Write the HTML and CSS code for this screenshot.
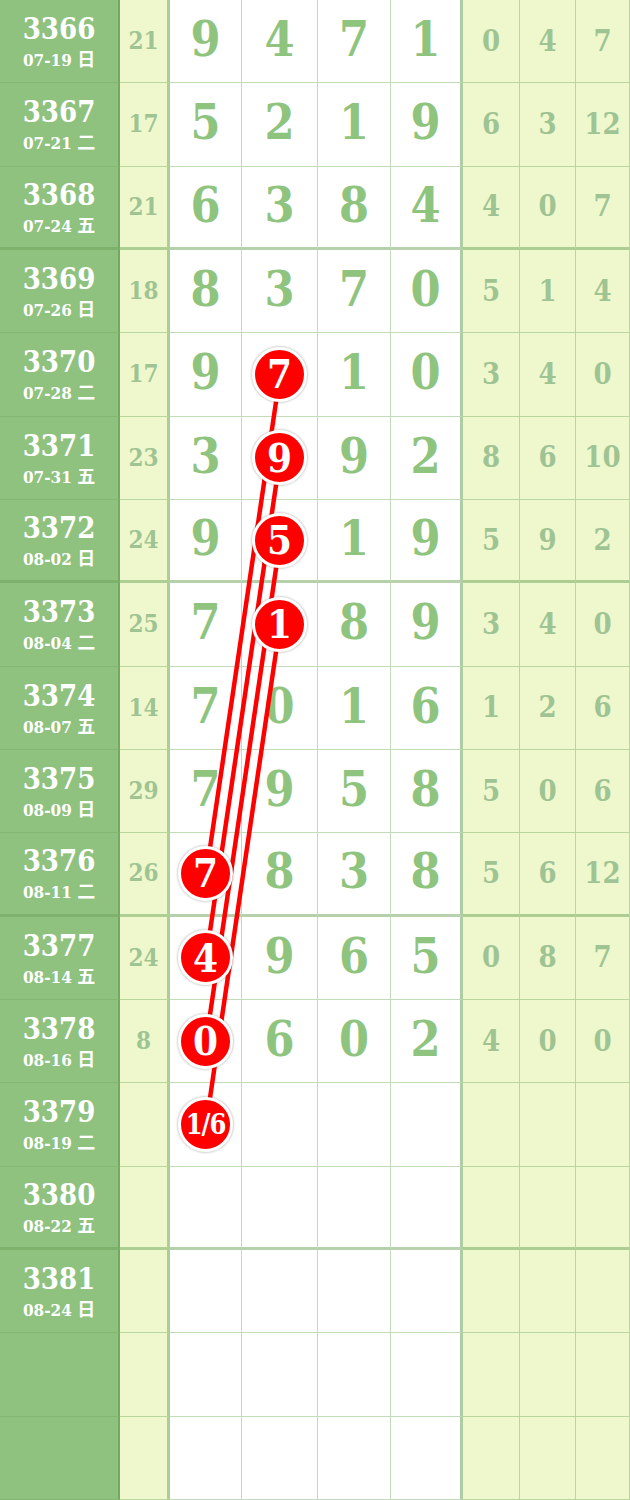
FILE: index.html
```html
<!DOCTYPE html>
<html lang="zh">
<head>
<meta charset="utf-8">
<title>走势图</title>
<link rel="stylesheet" href="styles.css">
</head>
<body>
<div class="board">
  <svg class="links" width="630" height="1500" viewBox="0 0 630 1500">
    <line x1="280" y1="375" x2="206" y2="875"/>
    <line x1="280" y1="458.33" x2="206" y2="958.33"/>
    <line x1="280" y1="541.67" x2="206" y2="1041.67"/>
    <line x1="280" y1="625" x2="206" y2="1125"/>
  </svg>

  <div class="row"><div class="c issue"><b>3366</b><span>07-19 <em>日</em></span></div><div class="c sum">21</div><div class="c n">9</div><div class="c n">4</div><div class="c n">7</div><div class="c n n4">1</div><div class="c m">0</div><div class="c m">4</div><div class="c m">7</div></div>
  <div class="row"><div class="c issue"><b>3367</b><span>07-21 <em>二</em></span></div><div class="c sum">17</div><div class="c n">5</div><div class="c n">2</div><div class="c n">1</div><div class="c n n4">9</div><div class="c m">6</div><div class="c m">3</div><div class="c m">12</div></div>
  <div class="row end"><div class="c issue"><b>3368</b><span>07-24 <em>五</em></span></div><div class="c sum">21</div><div class="c n">6</div><div class="c n">3</div><div class="c n">8</div><div class="c n n4">4</div><div class="c m">4</div><div class="c m">0</div><div class="c m">7</div></div>

  <div class="row"><div class="c issue"><b>3369</b><span>07-26 <em>日</em></span></div><div class="c sum">18</div><div class="c n">8</div><div class="c n">3</div><div class="c n">7</div><div class="c n n4">0</div><div class="c m">5</div><div class="c m">1</div><div class="c m">4</div></div>
  <div class="row"><div class="c issue"><b>3370</b><span>07-28 <em>二</em></span></div><div class="c sum">17</div><div class="c n">9</div><div class="c n"><i class="ball">7</i></div><div class="c n">1</div><div class="c n n4">0</div><div class="c m">3</div><div class="c m">4</div><div class="c m">0</div></div>
  <div class="row"><div class="c issue"><b>3371</b><span>07-31 <em>五</em></span></div><div class="c sum">23</div><div class="c n">3</div><div class="c n"><i class="ball">9</i></div><div class="c n">9</div><div class="c n n4">2</div><div class="c m">8</div><div class="c m">6</div><div class="c m">10</div></div>
  <div class="row end"><div class="c issue"><b>3372</b><span>08-02 <em>日</em></span></div><div class="c sum">24</div><div class="c n">9</div><div class="c n"><i class="ball">5</i></div><div class="c n">1</div><div class="c n n4">9</div><div class="c m">5</div><div class="c m">9</div><div class="c m">2</div></div>

  <div class="row"><div class="c issue"><b>3373</b><span>08-04 <em>二</em></span></div><div class="c sum">25</div><div class="c n">7</div><div class="c n"><i class="ball">1</i></div><div class="c n">8</div><div class="c n n4">9</div><div class="c m">3</div><div class="c m">4</div><div class="c m">0</div></div>
  <div class="row"><div class="c issue"><b>3374</b><span>08-07 <em>五</em></span></div><div class="c sum">14</div><div class="c n">7</div><div class="c n">0</div><div class="c n">1</div><div class="c n n4">6</div><div class="c m">1</div><div class="c m">2</div><div class="c m">6</div></div>
  <div class="row"><div class="c issue"><b>3375</b><span>08-09 <em>日</em></span></div><div class="c sum">29</div><div class="c n">7</div><div class="c n">9</div><div class="c n">5</div><div class="c n n4">8</div><div class="c m">5</div><div class="c m">0</div><div class="c m">6</div></div>
  <div class="row end"><div class="c issue"><b>3376</b><span>08-11 <em>二</em></span></div><div class="c sum">26</div><div class="c n"><i class="ball">7</i></div><div class="c n">8</div><div class="c n">3</div><div class="c n n4">8</div><div class="c m">5</div><div class="c m">6</div><div class="c m">12</div></div>

  <div class="row"><div class="c issue"><b>3377</b><span>08-14 <em>五</em></span></div><div class="c sum">24</div><div class="c n"><i class="ball">4</i></div><div class="c n">9</div><div class="c n">6</div><div class="c n n4">5</div><div class="c m">0</div><div class="c m">8</div><div class="c m">7</div></div>
  <div class="row"><div class="c issue"><b>3378</b><span>08-16 <em>日</em></span></div><div class="c sum">8</div><div class="c n"><i class="ball">0</i></div><div class="c n">6</div><div class="c n">0</div><div class="c n n4">2</div><div class="c m">4</div><div class="c m">0</div><div class="c m">0</div></div>
  <div class="row"><div class="c issue"><b>3379</b><span>08-19 <em>二</em></span></div><div class="c sum"></div><div class="c n"><i class="ball small">1/6</i></div><div class="c n"></div><div class="c n"></div><div class="c n n4"></div><div class="c m"></div><div class="c m"></div><div class="c m"></div></div>
  <div class="row end"><div class="c issue"><b>3380</b><span>08-22 <em>五</em></span></div><div class="c sum"></div><div class="c n"></div><div class="c n"></div><div class="c n"></div><div class="c n n4"></div><div class="c m"></div><div class="c m"></div><div class="c m"></div></div>

  <div class="row"><div class="c issue"><b>3381</b><span>08-24 <em>日</em></span></div><div class="c sum"></div><div class="c n"></div><div class="c n"></div><div class="c n"></div><div class="c n n4"></div><div class="c m"></div><div class="c m"></div><div class="c m"></div></div>
  <div class="row"><div class="c issue"></div><div class="c sum"></div><div class="c n"></div><div class="c n"></div><div class="c n"></div><div class="c n n4"></div><div class="c m"></div><div class="c m"></div><div class="c m"></div></div>
  <div class="row"><div class="c issue"></div><div class="c sum"></div><div class="c n"></div><div class="c n"></div><div class="c n"></div><div class="c n n4"></div><div class="c m"></div><div class="c m"></div><div class="c m"></div></div>
</div>
</body>
</html>
```

FILE: styles.css
```css
html, body {
  margin: 0;
  padding: 0;
  background: #ffffff;
}

.board {
  position: relative;
  width: 630px;
  font-family: "DejaVu Serif", "Noto Sans CJK SC", serif;
  font-weight: bold;
  font-stretch: condensed;
}

.links {
  position: absolute;
  left: 0;
  top: 0;
  z-index: 1;
  pointer-events: none;
}

.links line {
  stroke: #ff0000;
  stroke-width: 4.5;
  stroke-linecap: round;
}

.row {
  display: grid;
  grid-template-columns: 120px 50px 72px 76px 73px 72px 57px 56px 54px;
  height: 83.333px;
}

.c {
  box-sizing: border-box;
  display: flex;
  align-items: center;
  justify-content: center;
  border-right: 1px solid rgba(120, 175, 100, 0.45);
  border-bottom: 1px solid rgba(120, 175, 100, 0.45);
  line-height: 1;
}

.row.end .c {
  border-bottom: 3px solid rgba(110, 165, 90, 0.5);
}

.issue {
  flex-direction: column;
  background: #8fc17f;
  color: #ffffff;
  border-right: 2px solid rgba(90, 140, 70, 0.45);
  padding-top: 2px;
}

.issue b {
  font-size: 29px;
}

.issue span {
  font-size: 17px;
  margin-top: 5px;
}

.issue em {
  font-style: normal;
  font-family: "Noto Sans CJK SC", sans-serif;
  font-size: 18px;
  font-weight: bold;
}

.sum {
  background: #eff8cd;
  color: #9fc494;
  font-size: 24px;
  border-right: 3px solid rgba(110, 165, 90, 0.5);
}

.n {
  background: #ffffff;
  color: #8fc47f;
  font-size: 48px;
  padding-bottom: 4px;
}

.n4 {
  border-right: 3px solid rgba(110, 165, 90, 0.55);
}

.m {
  background: #eff8cd;
  color: #9fc494;
  font-size: 29px;
}

.ball {
  position: relative;
  z-index: 2;
  box-sizing: border-box;
  width: 55px;
  height: 55px;
  border-radius: 50%;
  background: #ff0000;
  border: 3px solid #ffffff;
  box-shadow: 0 0 2px 1px rgba(0, 0, 0, 0.18);
  color: #ffffff;
  font-style: normal;
  font-size: 40px;
  display: flex;
  align-items: center;
  justify-content: center;
  margin-top: 4px;
}

.ball.small {
  font-size: 27px;
  letter-spacing: -1px;
}
```
